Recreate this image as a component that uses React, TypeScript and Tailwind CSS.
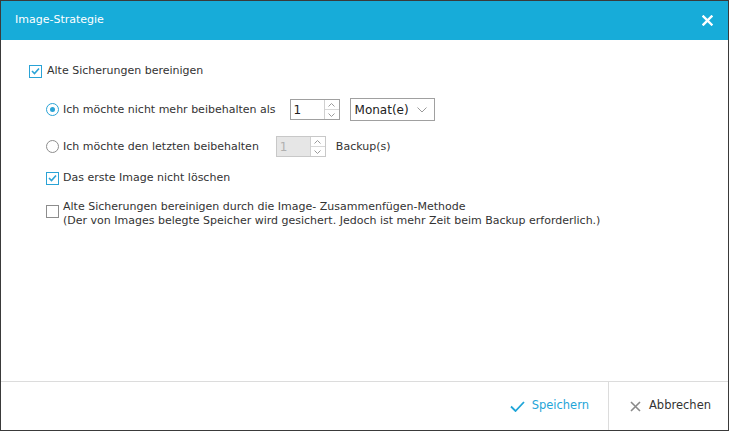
import React from "react";

const font = { fontFamily: '"DejaVu Sans", sans-serif' };

function Check({ checked }: { checked: boolean }) {
  return (
    <span
      className={`flex h-[13px] w-[13px] shrink-0 items-center justify-center border bg-white ${
        checked ? "border-[#2aa3d6]" : "border-[#8d8d8d]"
      }`}
    >
      {checked && (
        <svg width="9" height="8" viewBox="0 0 9 8">
          <path d="M1 4 L3.5 6.5 L8 1.5" fill="none" stroke="#2aa3d6" strokeWidth="1.6" />
        </svg>
      )}
    </span>
  );
}

function Radio({ checked }: { checked: boolean }) {
  return (
    <span
      className={`flex h-[13px] w-[13px] shrink-0 items-center justify-center rounded-full border bg-white ${
        checked ? "border-[#2aa3d6]" : "border-[#8d8d8d]"
      }`}
    >
      {checked && <span className="h-[5px] w-[5px] rounded-full bg-[#2aa3d6]" />}
    </span>
  );
}

function Spin({ value, disabled }: { value: string; disabled?: boolean }) {
  return (
    <div
      className={`flex h-[21px] w-[50px] border ${
        disabled ? "border-[#c8c8c8] bg-[#e6e6e6]" : "border-[#a0a0a0] bg-white"
      }`}
    >
      <span
        className={`flex flex-1 items-center pl-[3px] text-[12px] ${
          disabled ? "text-[#b0b0b0]" : "text-[#222]"
        }`}
      >
        {value}
      </span>
      <div className="flex w-[15px] flex-col border-l border-[#d0d0d0] bg-white">
        <span className="flex flex-1 items-center justify-center border-b border-[#d8d8d8]">
          <svg width="7" height="4" viewBox="0 0 7 4">
            <path d="M0.5 3.5 L3.5 0.5 L6.5 3.5" fill="none" stroke="#9a9a9a" strokeWidth="1" />
          </svg>
        </span>
        <span className="flex flex-1 items-center justify-center">
          <svg width="7" height="4" viewBox="0 0 7 4">
            <path d="M0.5 0.5 L3.5 3.5 L6.5 0.5" fill="none" stroke="#9a9a9a" strokeWidth="1" />
          </svg>
        </span>
      </div>
    </div>
  );
}

export default function App() {
  return (
    <div className="h-[432px] w-[731px] bg-white" style={font}>
      <div className="flex h-[431px] w-[729px] flex-col border border-[#3a3a3a] bg-white">
        <div className="flex h-[39px] shrink-0 items-center justify-between bg-[#17acd9] pl-[14px] pr-[15px]">
          <span className="text-[11px] text-white">Image-Strategie</span>
          <svg width="11" height="11" viewBox="0 0 11 11">
            <path d="M1.5 1.5 L9.5 9.5 M9.5 1.5 L1.5 9.5" stroke="white" strokeWidth="2.4" strokeLinecap="square" />
          </svg>
        </div>
        <div className="flex flex-1 flex-col pl-[28px] pt-[24px] text-[11px] leading-[14px] text-[#333]">
          <div className="flex h-[14px] items-center gap-[5px]">
            <Check checked />
            <span>Alte Sicherungen bereinigen</span>
          </div>
          <div className="ml-[17px] mt-[20px] flex h-[23px] items-center">
            <Radio checked />
            <span className="ml-[4px] mr-[14px]">Ich möchte nicht mehr beibehalten als</span>
            <Spin value="1" />
            <div className="ml-[10px] flex h-[23px] w-[85px] items-center justify-between border border-[#a0a0a0] bg-white pl-[4px] pr-[7px] text-[12px] text-[#222]">
              <span>Monat(e)</span>
              <svg width="10" height="6" viewBox="0 0 10 6">
                <path d="M0.5 0.5 L5 5 L9.5 0.5" fill="none" stroke="#9a9a9a" strokeWidth="1" />
              </svg>
            </div>
          </div>
          <div className="ml-[17px] mt-[15px] flex h-[21px] items-center">
            <Radio checked={false} />
            <span className="ml-[4px] mr-[17px]">Ich möchte den letzten beibehalten</span>
            <Spin value="1" disabled />
            <span className="ml-[10px]">Backup(s)</span>
          </div>
          <div className="ml-[17px] mt-[14px] flex h-[14px] items-center gap-[4px]">
            <Check checked />
            <span>Das erste Image nicht löschen</span>
          </div>
          <div className="ml-[17px] mt-[15px] flex items-start gap-[4px]">
            <span className="mt-[5px]">
              <Check checked={false} />
            </span>
            <span>
              Alte Sicherungen bereinigen durch die Image- Zusammenfügen-Methode
              <br />
              (Der von Images belegte Speicher wird gesichert. Jedoch ist mehr Zeit beim Backup erforderlich.)
            </span>
          </div>
        </div>
        <div className="flex h-[49px] shrink-0 border-t border-[#dcdcdc] text-[11.5px]">
          <div className="flex flex-1 items-center justify-end gap-[7px] pr-[19px] text-[#1fa5d8]">
            <svg width="15" height="11" viewBox="0 0 15 11">
              <path d="M1 5.5 L5.5 10 L14 1" fill="none" stroke="#1fa5d8" strokeWidth="1.8" />
            </svg>
            <span>Speichern</span>
          </div>
          <div className="flex w-[120px] items-center gap-[8px] border-l border-[#dcdcdc] pl-[21px] text-[#333]">
            <svg width="11" height="11" viewBox="0 0 11 11">
              <path d="M1 1 L10 10 M10 1 L1 10" stroke="#8a8a8a" strokeWidth="1.6" />
            </svg>
            <span>Abbrechen</span>
          </div>
        </div>
      </div>
    </div>
  );
}
